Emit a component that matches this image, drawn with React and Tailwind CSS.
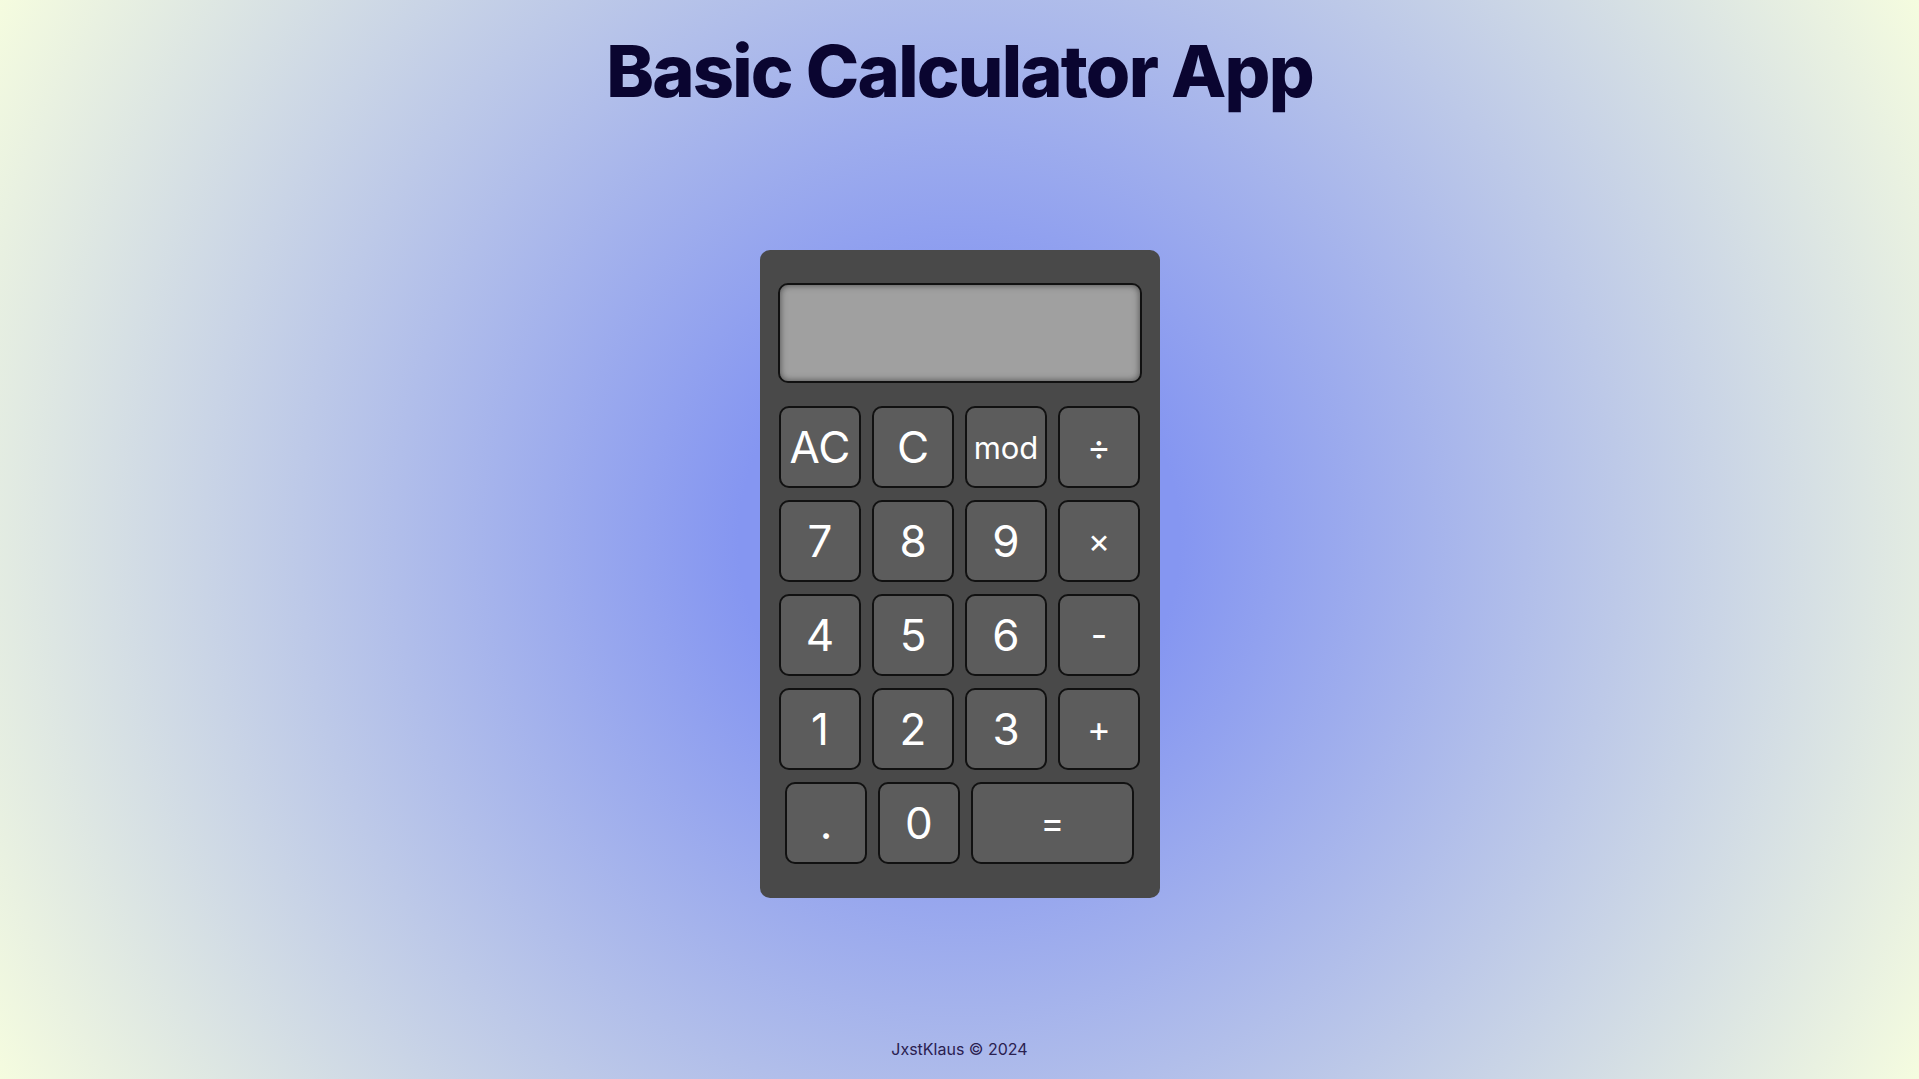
import React from "react"

const ROWS = [
  [
    { label: "AC", size: "text-[44px]" },
    { label: "C", size: "text-[44px]" },
    { label: "mod", size: "text-[31px]" },
    { label: "÷", size: "text-[36px]" },
  ],
  [
    { label: "7", size: "text-[44px]" },
    { label: "8", size: "text-[44px]" },
    { label: "9", size: "text-[44px]" },
    { label: "×", size: "text-[34px]" },
  ],
  [
    { label: "4", size: "text-[44px]" },
    { label: "5", size: "text-[44px]" },
    { label: "6", size: "text-[44px]" },
    { label: "-", size: "text-[36px]" },
  ],
  [
    { label: "1", size: "text-[44px]" },
    { label: "2", size: "text-[44px]" },
    { label: "3", size: "text-[44px]" },
    { label: "+", size: "text-[36px]" },
  ],
]

function Key({ label, size, wide }) {
  return (
    <button
      className={
        "flex items-center justify-center h-[82px] rounded-[10px] border-2 border-[#111] " +
        "bg-[#5c5c5c] text-white leading-none font-normal " +
        (wide ? "w-[163px] " : "w-[82px] ") +
        size
      }
    >
      {label}
    </button>
  )
}

export default function App() {
  return (
    <div
      className="flex flex-col h-screen overflow-hidden
                 bg-[radial-gradient(circle,#8596f1_20%,#f5fcdf_100%)]
                 font-['Inter','Liberation_Sans',sans-serif]"
    >
      {/* Title */}
      <header className="h-[129px] shrink-0 pt-[28px] flex justify-center">
        <h1 className="text-[72px] leading-[86px] font-extrabold text-[#0a0530] tracking-[-1.8px]">
          Basic Calculator App
        </h1>
      </header>

      {/* Calculator */}
      <main className="flex-1 flex items-center justify-center">
        <div className="w-[400px] h-[648px] rounded-[10px] bg-[#494949] px-[18px] pt-[33px]">
          <div
            className="h-[100px] rounded-[10px] border-2 border-[#111] bg-[#a0a0a0]
                       shadow-[inset_0_0_7px_rgba(0,0,0,0.55)]"
          />

          <div className="mt-[23px] flex flex-col gap-[12px]">
            {ROWS.map((row, i) => (
              <div key={i} className="flex justify-center gap-[11px]">
                {row.map((k) => (
                  <Key key={k.label} {...k} />
                ))}
              </div>
            ))}
            <div className="flex justify-center gap-[11px]">
              <Key label="." size="text-[44px]" />
              <Key label="0" size="text-[44px]" />
              <Key label="=" size="text-[36px]" wide />
            </div>
          </div>
        </div>
      </main>

      {/* Footer */}
      <footer className="h-[60px] shrink-0 flex items-center justify-center text-[16px] text-[#2a2050]">
        JxstKlaus © 2024
      </footer>
    </div>
  )
}
